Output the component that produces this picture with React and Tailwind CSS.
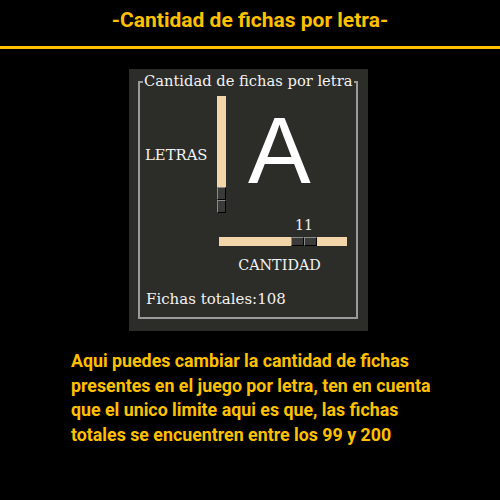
import React, { useState } from "react";

const serif = { fontFamily: '"DejaVu Serif", "Liberation Serif", serif' };

const ThumbCell = ({ className = "" }) => (
  <div className={`bg-[#3a3a38] border-t border-l border-[#8a8a8a] border-r border-b border-r-black border-b-black ${className}`} />
);

const App = () => {
  const [letter] = useState("A");
  const [amount] = useState(11);
  const [total] = useState(108);

  return (
    <div
      className="w-[500px] h-[500px] bg-black overflow-hidden"
      style={{ fontFamily: 'Roboto, "Liberation Sans", sans-serif' }}
    >
      <h1 className="pt-[6px] text-center text-[21px] leading-[28px] font-bold text-[#ffc000]">
        -Cantidad de fichas por letra-
      </h1>
      <div className="mt-[12px] h-[3px] bg-[#ffc000]" />

      <div className="mt-[20px] ml-[129px] w-[239px] h-[262px] bg-[#2c2c28] pt-[12px] pl-[9px] text-[#f2f2f2]" style={serif}>
        <div className="relative w-[220px] h-[238px] border-2 border-[#9a9a9a]">
          <span className="absolute left-[3px] -top-[10px] bg-[#2c2c28] px-[1px] text-[14.7px] leading-[16px] whitespace-nowrap">
            Cantidad de fichas por letra
          </span>

          <div className="flex mt-[13px]">
            <div className="w-[77px] flex items-center pl-[5px] text-[14.8px] leading-[16px]">LETRAS</div>
            <div className="w-[9px] h-[117px] flex flex-col">
              <div className="flex-1 bg-[#f2d6a9]" />
              <ThumbCell className="h-[13px]" />
              <ThumbCell className="h-[13px]" />
            </div>
            <div
              className="ml-[22px] mt-[9px] text-[94px] leading-[92px] text-white"
              style={{ fontFamily: '"Liberation Sans", Arial, sans-serif' }}
            >
              {letter}
            </div>
          </div>

          <div className="ml-[79px] w-[128px]">
            <div className="mt-[4px] ml-[72px] w-[26px] text-center text-[14px] leading-[16px]">{amount}</div>
            <div className="mt-[4px] h-[9px] flex">
              <div className="w-[72px] bg-[#f2d6a9]" />
              <ThumbCell className="w-[13px]" />
              <ThumbCell className="w-[13px]" />
              <div className="flex-1 bg-[#f2d6a9]" />
            </div>
            <div className="mt-[11px] w-[121px] text-center text-[14.4px] leading-[16px]">CANTIDAD</div>
          </div>

          <div className="mt-[18px] pl-[6px] text-[15px] leading-[16px]">Fichas totales:{total}</div>
        </div>
      </div>

      <p className="mt-[18px] ml-[71px] text-[17.8px] leading-[24.5px] font-bold text-[#ffc000] whitespace-nowrap">
        Aqui puedes cambiar la cantidad de fichas
        <br />
        presentes en el juego por letra, ten en cuenta
        <br />
        que el unico limite aqui es que, las fichas
        <br />
        totales se encuentren entre los 99 y 200
      </p>
    </div>
  );
};

export default App;
